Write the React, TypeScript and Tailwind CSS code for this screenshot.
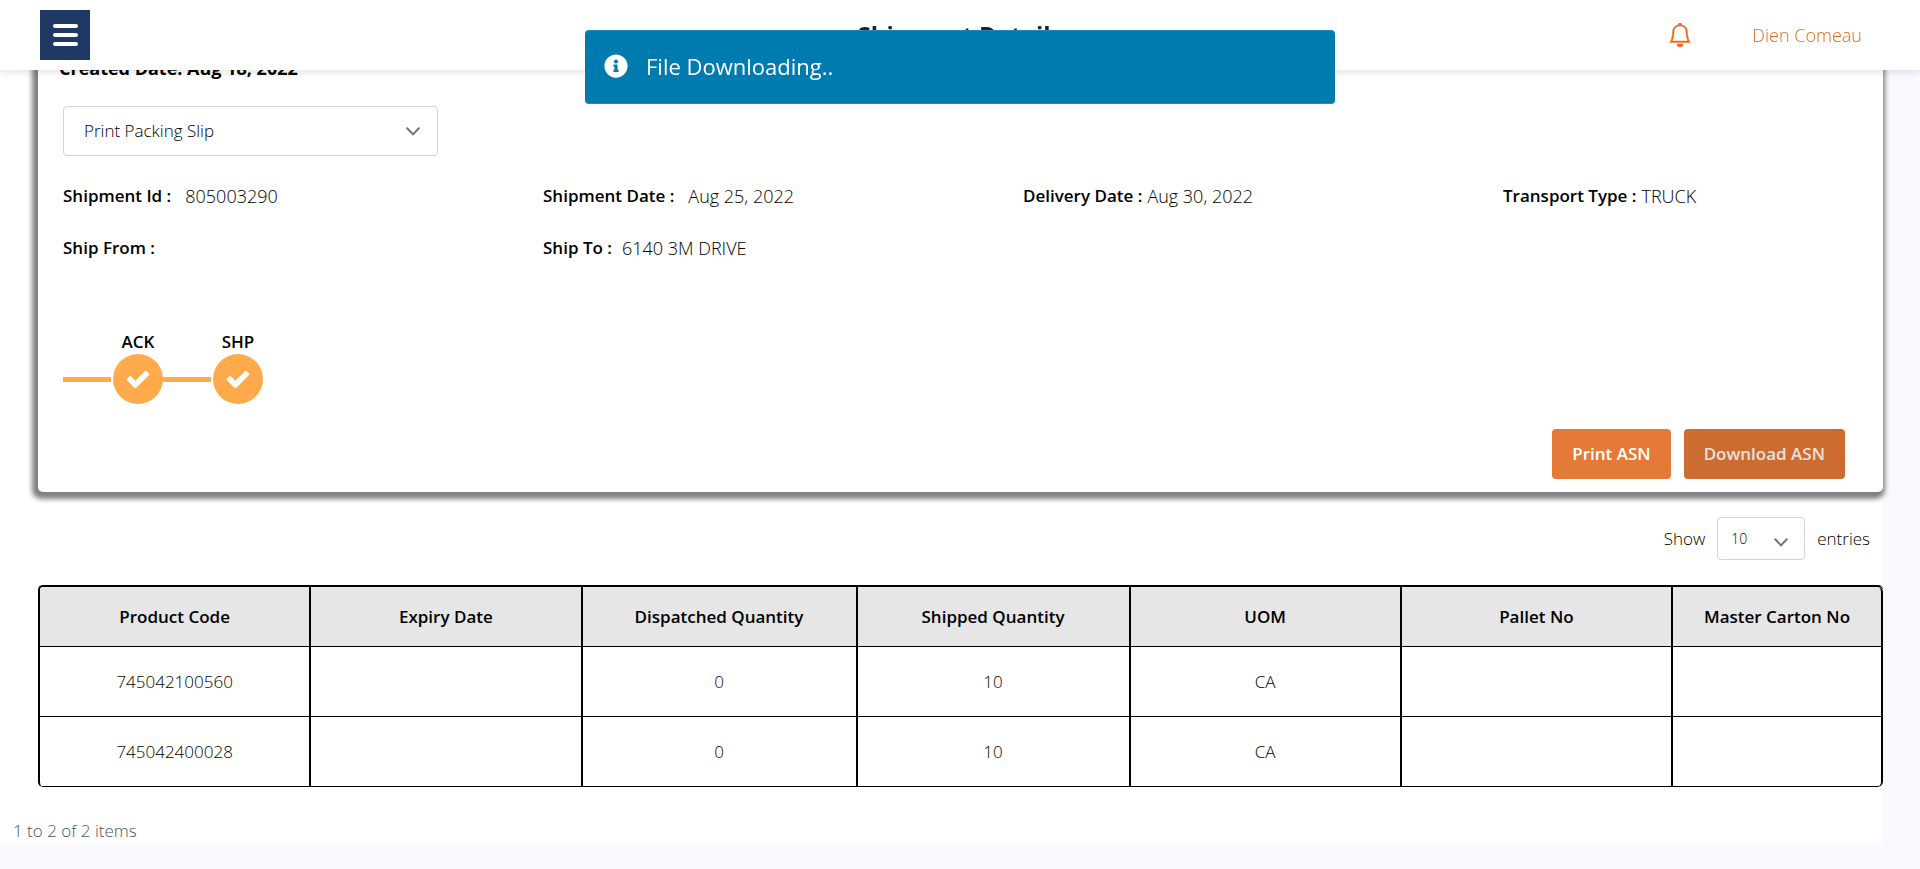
import { BsBell } from "react-icons/bs";
import { FaInfoCircle } from "react-icons/fa";

type Product = {
  code: string;
  expiry: string;
  dispatched: string;
  shipped: string;
  uom: string;
  pallet: string;
  carton: string;
};

const columns = [
  { title: "Product Code", width: "" },
  { title: "Expiry Date", width: "" },
  { title: "Dispatched Quantity", width: "w-[275px]" },
  { title: "Shipped Quantity", width: "w-[273px]" },
  { title: "UOM", width: "" },
  { title: "Pallet No", width: "" },
  { title: "Master Carton No", width: "w-[210px]" },
];

const products: Product[] = [
  { code: "745042100560", expiry: "", dispatched: "0", shipped: "10", uom: "CA", pallet: "", carton: "" },
  { code: "745042400028", expiry: "", dispatched: "0", shipped: "10", uom: "CA", pallet: "", carton: "" },
];

const details = [
  { label: "Shipment Id :", value: "805003290", gap: "gap-[14px]" },
  { label: "Shipment Date :", value: "Aug 25, 2022", gap: "gap-[14px]" },
  { label: "Delivery Date :", value: "Aug 30, 2022", gap: "gap-[5px]" },
  { label: "Transport Type :", value: "TRUCK", gap: "gap-[5px]" },
  { label: "Ship From :", value: "", gap: "gap-[10px]" },
  { label: "Ship To :", value: "6140 3M DRIVE", gap: "gap-[10px]" },
];

function Chevron() {
  return (
    <svg viewBox="0 0 14 9" className="h-[9px] w-[14px]" fill="none" stroke="#6c757d" strokeWidth="2" strokeLinecap="round" strokeLinejoin="round" aria-hidden="true">
      <path d="M1.2 1.2 7 7.4l5.800-6.200" />
    </svg>
  );
}

function Check() {
  return (
    <svg viewBox="0 0 1792 1792" className="size-[26px]" fill="currentColor" aria-hidden="true">
      <path d="M1671 566q0 40-28 68l-724 724-136 136q-28 28-68 28t-68-28l-136-136-362-362q-28-28-28-68t28-68l136-136q28-28 68-28t68 28l294 295 656-657q28-28 68-28t68 28l136 136q28 28 28 68z" />
    </svg>
  );
}

function Header() {
  return (
    <header className="fixed inset-x-0 top-0 z-10 grid h-[70px] grid-cols-[1fr_auto_1fr] items-center bg-white px-10 shadow-[0_2px_8px_rgba(0,0,0,0.12)]">
      <button type="button" aria-label="Menu" className="flex size-[50px] flex-col items-center justify-center gap-[5px] bg-[#203864]">
        <span className="h-1 w-[25px] rounded-full bg-white" />
        <span className="h-1 w-[25px] rounded-full bg-white" />
        <span className="h-1 w-[25px] rounded-full bg-white" />
      </button>
      <h1 className="text-2xl font-bold text-[#212529]">Shipment Details</h1>
      <div className="flex items-center justify-end gap-[60px] pr-[18px] text-[#e56a20]">
        <button type="button" aria-label="Notifications">
          <BsBell className="size-6" stroke="currentColor" strokeWidth={0.3} />
        </button>
        <a href="#profile" className="text-lg font-light">Dien Comeau</a>
      </div>
    </header>
  );
}

function Toast() {
  return (
    <div role="status" className="fixed inset-x-0 top-[30px] z-20 mx-auto flex h-[74px] w-[750px] max-w-full items-center gap-[18px] rounded border-y border-[#1f8abb] bg-[#007bb0] px-[19px] pb-[3px] text-white">
      <FaInfoCircle className="size-6" />
      <p className="text-[22px]">File Downloading..</p>
    </div>
  );
}

function Progress() {
  return (
    <ol className="flex">
      {["ACK", "SHP"].map((step) => (
        <li key={step} className="flex items-end">
          <span className="mr-[2px] mb-[22px] h-[5px] w-12 bg-[#ffab4c]" />
          <div className="flex w-[50px] flex-col items-center">
            <span className="font-semibold">{step}</span>
            <span className="flex size-[50px] items-center justify-center rounded-full bg-[#ffab4c] text-white">
              <Check />
            </span>
          </div>
        </li>
      ))}
    </ol>
  );
}

export default function App() {
  return (
    <div className="min-h-screen bg-[#f9faff] pr-[37px] font-['Open_Sans','Noto_Sans',sans-serif] text-[17px] leading-6 text-black">
      <Header />
      <Toast />
      <main className="bg-white">
        <section className="ml-[38px] rounded-[5px] bg-white pt-[54px] pb-[13px] pl-[25px] shadow-[-2px_3px_5px_4px_#808080]">
          <p className="-ml-1 text-lg leading-7 font-bold">Created Date: Aug 18, 2022</p>
          <div className="relative mt-6 flex w-[375px] items-center">
            <select aria-label="Print option" className="h-[50px] w-full appearance-none rounded border border-[#ced4da] bg-white px-5 font-light">
              <option>Print Packing Slip</option>
            </select>
            <span className="pointer-events-none absolute right-[18px]"><Chevron /></span>
          </div>
          <dl className="mt-7 grid grid-cols-[24fr_24fr_24fr_19fr] gap-y-7">
            {details.map((d) => (
              <div key={d.label} className={`flex ${d.gap}`}>
                <dt className="font-semibold">{d.label}</dt>
                <dd className="text-lg leading-6 font-light">{d.value}</dd>
              </div>
            ))}
          </dl>
          <div className="mt-[70px]">
            <Progress />
          </div>
          <div className="mt-[25px] flex justify-end gap-[13px] pr-[38px] font-semibold">
            <button type="button" className="h-[50px] rounded bg-[#e57a38] px-5 text-white">Print ASN</button>
            <button type="button" disabled className="h-[50px] rounded bg-[#cd6c31] px-5 text-[#e6e1df]">Download ASN</button>
          </div>
        </section>

        <div className="mt-[25px] flex items-center justify-end gap-3 pr-[13px] font-light">
          <label htmlFor="page-size">Show</label>
          <div className="relative flex w-[88px] items-center">
            <select id="page-size" className="h-[43px] w-full appearance-none rounded border border-[#ced4da] bg-white px-[13px] text-sm">
              <option>10</option>
            </select>
            <span className="pointer-events-none absolute right-[17px] pt-2"><Chevron /></span>
          </div>
          <span>entries</span>
        </div>

        <div className="mt-[25px] ml-[38px]">
          <table className="w-full table-fixed border-separate border-spacing-0 overflow-hidden rounded-[5px] border-t-2 border-l-2 border-black text-center">
            <thead>
              <tr className="h-[60px] bg-[#e6e6e6]">
                {columns.map((c) => (
                  <th key={c.title} scope="col" className={`border-r-2 border-b border-black font-semibold last:rounded-tr-[5px] ${c.width}`}>{c.title}</th>
                ))}
              </tr>
            </thead>
            <tbody className="font-light">
              {products.map((p) => (
                <tr key={p.code} className="group h-[70px]">
                  {[p.code, p.expiry, p.dispatched, p.shipped, p.uom, p.pallet, p.carton].map((v, i) => (
                    <td key={columns[i].title} className="border-r-2 border-b border-black group-last:last:rounded-br-[5px]">{v}</td>
                  ))}
                </tr>
              ))}
            </tbody>
          </table>
        </div>
        <p className="mt-8 ml-[13px] font-light text-[#4b545c]">1 to 2 of 2 items</p>
      </main>
    </div>
  );
}
